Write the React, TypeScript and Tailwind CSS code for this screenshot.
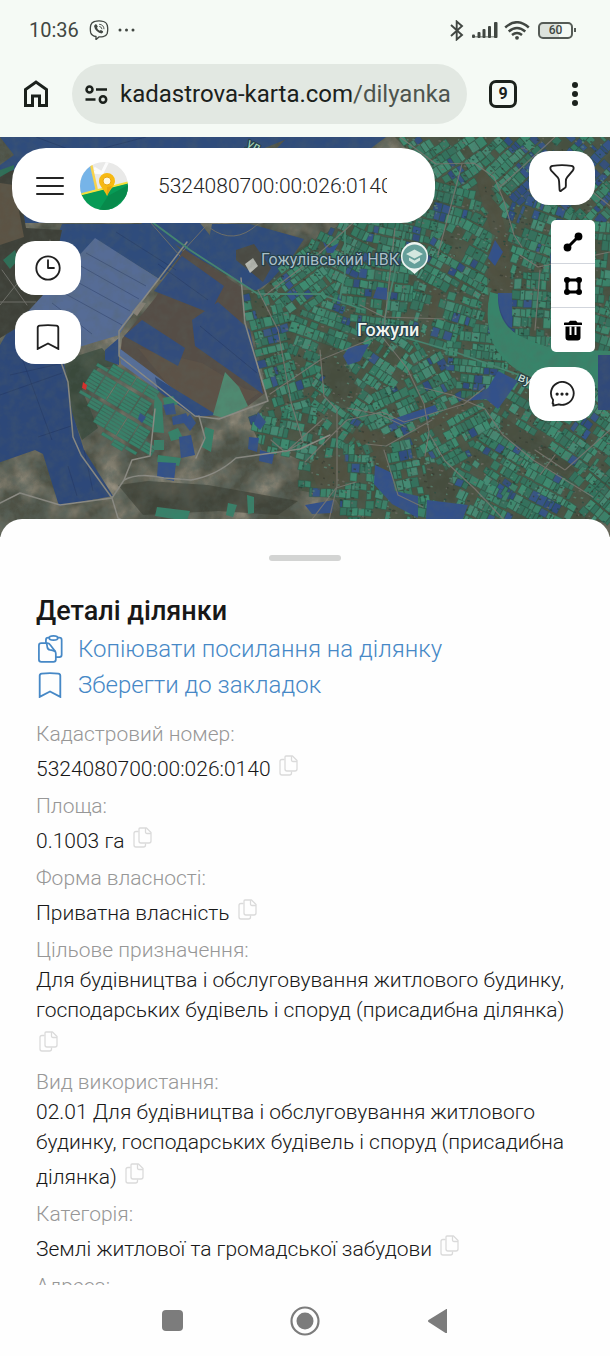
import type { ReactNode } from "react";

type Point = [number, number];

function createRandom(seed: number) {
  let state = seed;
  return () => {
    state = (state * 1664525 + 1013904223) % 4294967296;
    return state / 4294967296;
  };
}

function inside([x, y]: Point, polygon: Point[]) {
  let hit = false;
  for (let i = 0, j = polygon.length - 1; i < polygon.length; j = i++) {
    const [xi, yi] = polygon[i];
    const [xj, yj] = polygon[j];
    if (yi > y !== yj > y && x < ((xj - xi) * (y - yi)) / (yj - yi) + xi) hit = !hit;
  }
  return hit;
}

const toPath = (points: Point[]) =>
  "M" + points.map(([x, y]) => `${x.toFixed(1)} ${y.toFixed(1)}`).join("L") + "Z";

const town: Point[] = [
  [395, 137], [612, 137], [612, 522], [350, 522], [336, 500], [318, 494], [298, 490], [300, 460], [282, 452],
  [262, 450], [250, 422], [268, 400], [262, 370], [252, 330], [241, 290], [262, 290], [300, 248], [345, 222], [425, 170],
];

const wasteland: Point[][] = [
  [[484, 165], [498, 200], [508, 240], [512, 290], [505, 325], [490, 330], [487, 280], [492, 235], [476, 180]],
  [[318, 335], [345, 355], [358, 385], [350, 408], [334, 400], [322, 370]],
  [[355, 425], [400, 438], [470, 395], [478, 402], [420, 436], [385, 445], [390, 475], [376, 475], [368, 445], [345, 440]],
  [[500, 415], [540, 440], [575, 470], [565, 476], [530, 455], [500, 436]],
  [[308, 460], [345, 455], [350, 485], [318, 490]],
  [[425, 460], [452, 468], [455, 502], [430, 500]],
  [[432, 285], [442, 290], [434, 322], [428, 320]],
];

/* Each quarter has a centre and the direction of its plots, in radians. */
const quarters: [number, number, number][] = [
  [262, 330, -0.25], [275, 385, -0.3], [300, 285, -0.65], [345, 250, 0.45], [320, 330, 0.35], [375, 300, 0.12],
  [395, 240, 0.2], [430, 200, 0.25], [445, 155, -0.6], [460, 260, 0.5], [440, 320, 0.3], [385, 365, 0.6],
  [430, 375, -0.5], [470, 360, 0.1], [520, 170, -0.75], [570, 180, -0.8], [540, 230, 0.35], [585, 270, 0.1],
  [540, 310, 0.05], [585, 330, 0.3], [390, 410, -0.45], [290, 440, 0.2], [450, 430, -0.5], [500, 460, 0.55],
  [545, 415, 0.55], [585, 440, 0.6], [550, 495, 0.5], [600, 490, 0.7], [470, 500, 0.45], [410, 480, -0.2],
  [340, 500, 0.05], [400, 515, 0.2], [350, 395, 0.6],
];

function buildParcels() {
  const random = createRandom(71);
  const groups: Record<string, string[]> = {};
  const greens = ["#357a62", "#3a836a", "#3e8b70", "#33725d", "#458b74"];
  quarters.forEach(([cx, cy, angle], index) => {
    const cos = Math.cos(angle);
    const sin = Math.sin(angle);
    const place = (u: number, v: number): Point => [cx + u * cos - v * sin, cy + u * sin + v * cos];
    let v = -56;
    let row = 0;
    while (v < 56) {
      const height = 6 + random() * 4;
      let u = -56;
      while (u < 56) {
        const width = 3 + random() * 6;
        const tilt = random() * 1.6 - 0.8;
        const centre = place(u + width / 2, v + height / 2);
        const pick = random();
        const tint = random();
        const patch =
          Math.sin(centre[0] / 9 + centre[1] / 23) + Math.cos(centre[1] / 8 - centre[0] / 17) + Math.sin((centre[0] + centre[1]) / 31);
        const shape = [place(u, v), place(u + width - 0.4, v + tilt), place(u + width - 0.4, v + height), place(u, v + height - tilt)];
        u += width;
        if (!inside(centre, town) || wasteland.some((area) => inside(centre, area))) continue;
        const own = quarters.every(
          ([qx, qy], other) =>
            other === index || Math.hypot(qx - centre[0], qy - centre[1]) >= Math.hypot(cx - centre[0], cy - centre[1]),
        );
        if (!own || pick > (patch < -0.9 ? 0.5 : 0.93)) continue;
        const blueChance = centre[1] < 220 && centre[0] > 510 ? 0.42 : patch > 1.3 ? 0.36 : 0.03;
        const colour = pick < blueChance ? (tint > 0.5 ? "#304c7f" : "#355488") : greens[Math.floor(tint * greens.length)];
        (groups[colour] ??= []).push(toPath(shape));
      }
      v += height + (row % 2 ? 1.8 : 0.3);
      row++;
    }
  });
  return Object.entries(groups);
}

function buildSpecks() {
  const random = createRandom(9);
  const groups: Record<string, string[]> = { "#706d66": [], "#35392f": [], "#20493d": [], "#5a8b78": [] };
  const keys = Object.keys(groups);
  for (let i = 0; i < 2800; i++) {
    const x = 235 + random() * 375;
    const y = 137 + random() * 385;
    const key = keys[Math.floor(random() * keys.length)];
    const w = 1 + random() * 2;
    if (inside([x, y], town)) groups[key].push(`M${x.toFixed(1)} ${y.toFixed(1)}l${w.toFixed(1)} .6l-.5 1.400l-${w.toFixed(1)}-.6z`);
  }
  return Object.entries(groups);
}

function buildAllotments() {
  const outline: Point[] = [[100, 366], [118, 366], [154, 387], [151, 456], [130, 453], [113, 447], [96, 420], [81, 388]];
  const cells: string[] = [];
  for (let i = -7; i < 9; i++) {
    for (let j = -22; j < 26; j++) {
      const ox = 118 + i * 11.8 - j * 1.9;
      const oy = 408 + i * 7 + j * 3;
      const cell: Point[] = [[ox, oy], [ox + 10.8, oy + 6.4], [ox + 9.1, oy + 9.1], [ox - 1.7, oy + 2.7]];
      if (j % 7 !== 0 && inside([ox + 4.5, oy + 4.5], outline)) cells.push(toPath(cell));
    }
  }
  return cells.join("");
}

const parcels = buildParcels();
const specks = buildSpecks();
const allotments = buildAllotments();

function SatelliteMap() {
  return (
    <svg
      className="absolute inset-0 h-full w-full"
      viewBox="0 137 610 400"
      preserveAspectRatio="xMidYMin slice"
      role="img"
      aria-label="Гожули"
    >
      <defs>
        <filter id="grain" x="0" y="0" width="100%" height="100%">
          <feTurbulence type="fractalNoise" baseFrequency="0.1" numOctaves="5" seed="4" />
          <feColorMatrix values="0 0 0 0 0.1  0 0 0 0 0.13  0 0 0 0 0.11  1.7 0 0 0 -0.6" />
        </filter>
        <filter id="haze" x="0" y="0" width="100%" height="100%">
          <feTurbulence type="fractalNoise" baseFrequency="0.03" numOctaves="4" seed="12" />
          <feColorMatrix values="0 0 0 0 0.42  0 0 0 0 0.37  0 0 0 0 0.29  0 1.6 0 0 -0.62" />
        </filter>
      </defs>
      <path fill="#4e5145" d="M0 137h610v400H0z" />
      <path filter="url(#haze)" d="M0 137h610v400H0z" />
      <path filter="url(#grain)" opacity=".75" d="M0 137h610v400H0z" />

      {/* Forest belts and ravines */}
      <g opacity=".6">
        <path fill="#2e4436" d="M64 360l38-12 16 18-20 2-16 22 16 38-16 12-12-30z" />
        <path fill="#383c32" d="M118 485l30-4 60 4 90 16-20 14-60-4-75 4z" />
        <path fill="#2b3f36" d="M530 440l25 10 20 20-12 2-30-18z" />
      </g>

      {/* Large fields */}
      <g fill="#2f4c7c">
        <path d="M0 137h292l-30 12-20 74h-42l55 68-66-38-48-30H0l0-58 14-10z" />
        <path d="M62 224h91l30 28-22 28-66-41-50 72-18 2z" />
        <path fill="#2d4879" d="M0 345l16-28 28-3 20 48 8 50 12 38 29 46-54 10-16-52-8-4-37 13z" />
        <path d="M212 224h38l54 15-24 36-24 16-50-36z" />
        <path d="M288 137h98l-16 12h-94z" />
      </g>
      <path fill="#3e4038" d="M0 172l16-2 10 58 36 2-12 55-20 35L0 338z" />
      <path fill="#5c5344" d="M0 183l14 2 10 52-24 8z" />
      <path fill="#4a4a43" d="M236 250l18-6 17 24-8 14-27-22z" />
      <path fill="#b8bab2" d="M245 264l8-6 5 8-8 7z" />
      <path fill="#554d46" d="M184 249l57 38 2 36 22 70-17 13-49 11-79-60 2-18 34-42z" />
      <path fill="#65584a" opacity=".45" d="M138 348l64 15 43 26 15 3-33 24-32 2z" />
      <path fill="#566c96" d="M95 238l64 41-34 46-6 10-40 12-17 12-40-41z" />
      <path fill="#8a8378" d="M140 302l6 1-9 13-5-4z" />
      <path fill="#2f4c82" fillOpacity=".9" d="M182 256l42 30-14 27-56-22zM142 320l43 28-7 18-54-30zM192 320l26-18 32 28 13 64-68-48z" />
      <path fill="#566f9b" d="M119 348l43 32 44 35-12 1-73-52z" />
      <path fill="#2f4c7f" d="M155 377l62 38-22 2-37-26zM105 350l14-12v27l-14-5z" />
      <path fill="#4f8a71" d="M225 372l14 15 9 19-24 12-11-3z" />
      <path fill="#2c7058" d="M0 170l14-5v4l-14 8zM3 260l12-10 3 10-8 9z" />
      <path stroke="#1c2e58" strokeWidth=".6" opacity=".6" fill="none" d="M86 253l60 33M79 265l60 34M70 278l60 33M62 292l60 33M52 303l40 31M18 347l34 93M0 395l62-22M38 437l33-11M158 264l50 36M200 326l57 47M10 375l58-13M68 466l9 30M84 450l9 41M116 232l60 38M36 137l40 15M146 137l-46 12" />

      {/* Settlement parcels */}
      <path fill="#45503f" opacity=".8" d={toPath(town)} />
      {parcels.map(([colour, shapes]) => (
        <path key={colour} fill={colour} stroke="#265344" strokeWidth=".4" d={shapes.join("")} />
      ))}
      {wasteland.map((area, index) => (
        <path key={index} fill={index % 2 ? "#45493c" : "#544e3d"} opacity=".5" d={toPath(area)} />
      ))}
      {specks.map(([colour, shapes]) => (
        <path key={colour} fill={colour} opacity=".7" d={shapes.join("")} />
      ))}
      <path fill="#37826a" stroke="#2b6b57" strokeWidth=".3" d={allotments} />
      <g fill="#37826a">
        <path d="M155 393l7 10 2 30-12-1zM163 398l10-2 5 8-13 4zM154 440h10v10h-10zM168 432l10-4 5 10-12 3zM158 455l23 3-2 8-22-4zM205 427l9 3-3 22-9-5zM157 507l33 4-3 10-32-5zM228 503l9 2-4 12-7-2zM247 495l7 2 0 16-6 1z" />
      </g>
      <g fill="#33518a">
        <path d="M163 405l11-2 2 11-10 1zM172 417l14-4 4 9-17 3zM190 414l6 9-6 8-7-9zM179 437l12-2 4 20-14 3zM158 462l18 1-2 18-17-4zM140 413l6 4-4 6-4-4zM258 412l8 10-6 8-6-6zM249 437l10 1-2 14-9-3zM260 450l14 4-2 10-13-3zM349 347l20-3-9 17-12 4-5-9zM498 371l20 10-20 28-12-10-20 2 22-13zM498 293h14v35l-12-6-7-18zM495 240l8 12-8 14-7-8zM377 287l10 1 0 12-14-2zM550 252l5 20-4 4zM323 241l6 7 10-5-6 10h-6zM375 465l17 8 3 18 23 5v22l-26-14-18-20z" />
        <path d="M305 505l29-5-2 13-20 1zM390 420l45-15 3 6-40 15zM427 500l41 5-6 16-36-2z" />
      </g>
      <path fill="#d9302c" d="M83 382l4 3-1 5-4-2z" />

      {/* River bend */}
      <path fill="#31497a" d="M498 294q0 24 18 40t42 18l52 4v9l-50-6q-42-7-60-30-10-15-8-35z" />
      <path fill="#38846a" d="M490 292l8 2q-1 30 22 42 24 12 42 13l48 2v34h-16l-63-8q-28-12-38-34-9-22-3-51z" />
      <path fill="#30497a" d="M598 355h12v55h-12z" />

      {/* Roads */}
      <g fill="none" strokeLinejoin="round" strokeLinecap="round">
        <path stroke="#8c8b84" strokeWidth="1.5" d="M61 362l7 20 5 55 8 18 31 43 12-18q15-8 40-2l27 2q25-4 45-22l64-9 30-14M112 498l6 20 22 11M112 498l-52 7-40-12-20 10M124 480l8-20 18-4 5-47M241 278l4 45 23 78-49 18-24-3-76-60 0-25 68-89M199 416l6 22-9 20" />
        <path stroke="#6f6f69" strokeWidth="1" d="M0 305l48-60M50 240l2 40M2 270l25 35M0 302h36M183 251l22-24 7-8M150 222l30 34M210 228q24 18 48-4l30-8" />
        <path stroke="#458670" strokeWidth="1.800" d="M152 222l38 28 68 44h62l44 16M400 336l55 16 67 24M382 330l20-90M345 222v50l-5 26" />
        <path stroke="#7c7871" strokeWidth="1.200" opacity=".85" d="M400 137l36 27 38-1 20 14 10 24 10 34 8 12M462 164l-24 90M395 228l-12 110 24 30 17 36 5 28-4 24M424 388l28 7 33 14 18 26 30 25 60 37M320 350l4 46 13 14v76l-8 34M305 462l42-42 35-8 22 10 60-18 20-16M347 408l32 6 25 12M366 444l20 2 46-26M384 450l14 45 25 12M430 435l15 26 30 28 30 32M258 290l20 40 13 72 12 40-18 10-14-12M264 296l50-38 40-36M520 255l18 12 72-15M540 270l-5 60M360 305l24 12 60 2M412 160l-20 60M555 137l-55 50M590 190l20 16M610 430l-45 40-30-20M555 455l-15 20M270 394l50-34 56-23M288 450l34-30M310 522l26-34 20-6" />
      </g>
      <path filter="url(#grain)" opacity=".28" d="M0 137h610v400H0z" />

      {/* Place names */}
      <g className="font-[Roboto,sans-serif]" stroke="#26404a" strokeWidth="2.400" paintOrder="stroke" strokeLinejoin="round">
        <text x="261" y="265" fontSize="16" fill="#a9bfc8">Гожулівський НВК</text>
        <text x="357" y="336" fontSize="18" fontWeight="500" fill="#f0f3ee">Гожули</text>
        <text x="517" y="380" fontSize="13" fill="#d3e5dc" transform="rotate(24 517 380)">ву</text>
        <text x="246" y="146" fontSize="13" fill="#a8d7ba" transform="rotate(28 246 146)">ул</text>
      </g>
      <path fill="#edf4f1" d="M414.500 242a14 14 0 0 0-13.500 15c0 7 5 11 9 13l4.500 4 4.500-4c5-3 9-7 9-13a14 14 0 0 0-13.500-15z" />
      <circle cx="414.500" cy="256.500" r="12" fill="#659f9a" />
      <path fill="#d3e7df" d="M406 254l8.500-4.500 8.500 4.500-8.500 4.500zM409 257.500l5.500 3 5.500-3v3l-5.500 3.500-5.500-3.500z" />
    </svg>
  );
}

function Line({ className, children, width = 2 }: { className: string; children: ReactNode; width?: number }) {
  return (
    <svg
      className={className}
      viewBox="0 0 24 24"
      fill="none"
      stroke="currentColor"
      strokeWidth={width}
      strokeLinecap="round"
      strokeLinejoin="round"
      aria-hidden="true"
    >
      {children}
    </svg>
  );
}

const BookmarkIcon = ({ className }: { className: string }) => (
  <Line className={className} width={1.7}>
    <path d="M2.500 23V3.500q0-1.800 1.800-2Q12 .7 19.700 1.500q1.800.2 1.800 2V23L12 18z" strokeLinejoin="miter" />
  </Line>
);

function StatusBar() {
  return (
    <div className="flex h-[60px] items-center justify-between pr-[34px] pl-[29px] text-[#414742]">
      <div className="flex items-center">
        <span className="text-[20px] leading-6">10:36</span>
        <svg className="ml-[10px] h-5 w-5" viewBox="0 0 20 20" fill="none" stroke="currentColor" strokeWidth="1.300" strokeLinecap="round" aria-label="Viber">
          <path d="M5.500 1.500Q10 .2 14.500 1.500 17.700 2.400 18.300 5.500q.9 4-.1 8-1 2.700-4 3.100-2 .4-4.200.3l-3 2.700v-3.100Q2.800 15.800 1.800 13q-1-4 0-8Q2.700 2.200 5.500 1.500z" />
          <path d="M10.500 4.300q4.300.3 4.500 4.500M10.700 6.500q2 .2 2.200 2.300" strokeWidth=".9" />
          <path fill="currentColor" stroke="none" d="M6.300 4.300l1.300.2 1.200 2-.8 1.300q.6 2 2.700 2.900l1.200-.8 2.100 1.300.1 1-1.400 1.400q-2.700-.3-5-2.600-2.300-2.400-2.700-5z" />
        </svg>
        <svg className="ml-[9px] h-1 w-[17px]" viewBox="0 0 17 4" fill="currentColor" aria-hidden="true">
          <circle cx="2" cy="2" r="1.500" /><circle cx="8.500" cy="2" r="1.500" /><circle cx="15" cy="2" r="1.500" />
        </svg>
      </div>
      <div className="flex items-center">
        <svg className="h-[21px] w-[14px]" viewBox="0 0 14 21" fill="none" stroke="currentColor" strokeWidth="1.900" aria-label="Bluetooth">
          <path d="M1 5l11 10-5.300 4.500V1.500L12 6 1 16" />
        </svg>
        <svg className="ml-[8px] h-4 w-[26px]" viewBox="0 0 26 16" fill="currentColor" aria-hidden="true">
          <rect x="0" y="12.500" width="3" height="3.500" rx="1" /><rect x="5.500" y="10" width="3" height="6" rx="1" />
          <rect x="10.500" y="7" width="3" height="9" rx="1" /><rect x="16" y="4" width="3" height="12" rx="1" /><rect x="22" y="0" width="3.500" height="16" rx="1" />
          <rect x="3" y="14" width="21" height="1.500" opacity=".5" />
        </svg>
        <svg className="ml-[6px] h-[19px] w-[26px]" viewBox="0 0 26 19" fill="none" stroke="currentColor" strokeWidth="2.500" aria-label="Wi-Fi">
          <path d="M1.200 6.500Q13-4 24.800 6.500M4.700 10.500q8.300-7 16.600 0M8 14q5-4 10 0" />
          <circle cx="13" cy="16.800" r="1.900" fill="currentColor" stroke="none" />
        </svg>
        <span className="ml-[8px] flex h-[17px] w-[35px] items-center justify-center rounded-[5px] border-2 border-[#555b56] bg-linear-to-r from-[#dce2dc] from-60% to-[#f5faf5] to-60% text-[12px] leading-3 font-medium">60</span>
        <span className="ml-px h-1 w-[2px] bg-[#555b56]" />
      </div>
    </div>
  );
}

function BrowserBar() {
  return (
    <div className="flex items-center px-[23px] pt-1 pb-[13px] text-[#1b211c]">
      <button type="button" aria-label="Home" className="shrink-0">
        <svg className="h-[30px] w-[26px]" viewBox="0 0 26 30" fill="none" stroke="currentColor" strokeWidth="3">
          <path d="M2.500 26.500V10.500L13 3l10.500 7.500v16h-7V17h-7v9.500z" />
        </svg>
      </button>
      <div className="ml-[23px] flex h-[60px] min-w-0 flex-1 items-center rounded-full bg-[#e2e8e2] pr-1 pl-3">
        <button type="button" aria-label="Site information" className="shrink-0">
          <svg className="h-[19px] w-6" viewBox="0 0 24 19" fill="none" stroke="currentColor" strokeWidth="2.500">
            <circle cx="5.500" cy="4.500" r="3" /><path d="M12 4.500h11M1.500 14.500h10" /><circle cx="19" cy="14.500" r="3.200" />
          </svg>
        </button>
        <span className="ml-3 whitespace-nowrap text-[24px] leading-8">
          kadastrova-karta.com<span className="text-[#4d544e]">/dilyanka</span>
        </span>
      </div>
      <button type="button" aria-label="Tabs" className="ml-[22px] flex h-7 w-7 shrink-0 items-center justify-center rounded-[7px] border-[3px] border-current text-[16px] leading-4 font-bold">
        9
      </button>
      <button type="button" aria-label="Menu" className="ml-[46px] w-6 shrink-0">
        <svg className="mx-auto h-6 w-2" viewBox="0 0 8 24" fill="currentColor">
          <circle cx="4" cy="3" r="3" /><circle cx="4" cy="12" r="3" /><circle cx="4" cy="21" r="3" />
        </svg>
      </button>
    </div>
  );
}

function Logo() {
  return (
    <svg className="h-12 w-12 shrink-0" viewBox="0 0 48 48" role="img" aria-label="Kadastrova karta">
      <clipPath id="logo-disc"><circle cx="24" cy="24" r="24" /></clipPath>
      <g clipPath="url(#logo-disc)">
        <path fill="#e9e9e8" d="M0 0h48v48H0z" />
        <path fill="#76b4e8" d="M0 0h10l7 27-17 6z" />
        <path stroke="#fbfbfb" strokeWidth="3" fill="none" d="M14 6l8 5 15 15M12 10l10 1 6-12" />
        <path stroke="#f8d34b" strokeWidth="2.500" fill="none" d="M11 2l6 27" />
        <path fill="#079b56" d="M0 33l48-12v27H0z" />
        <path fill="#078a4b" d="M28 34l20-11v10L31 48H19z" />
        <path stroke="#f5df3a" strokeWidth="2" fill="none" d="M0 32.500l48-12" />
        <path fill="#f7b912" d="M27 11a8 8 0 0 0-8 8c0 5 5 8 8 15 3-7 8-10 8-15a8 8 0 0 0-8-8z" />
        <path fill="#e8a512" d="M27 34V25l5-1c-2 3-3 6-5 10z" />
        <circle cx="27" cy="19" r="4" fill="#fff8df" stroke="#e8a512" />
      </g>
    </svg>
  );
}

const mapButton = "flex h-[54px] w-[66px] items-center justify-center rounded-[20px] bg-white text-[#202020]";
const toolButton = "flex h-11 w-11 items-center justify-center text-black";

function MapSection() {
  return (
    <section className="relative h-[400px] shrink-0">
      <SatelliteMap />
      <div className="relative flex items-start gap-[94px] pr-[15px] pl-3">
        <div className="min-w-0 flex-1 pt-[11px]">
          <div className="flex h-[75px] items-center rounded-[34px] bg-white pr-12 pl-6">
            <button type="button" aria-label="Меню">
              <svg className="h-5 w-7" viewBox="0 0 28 20" stroke="#242424" strokeWidth="2" strokeLinecap="round">
                <path d="M1 2h26M1 10h26M1 18h26" />
              </svg>
            </button>
            <span className="ml-4"><Logo /></span>
            <input
              type="text"
              aria-label="Кадастровий номер"
              defaultValue="5324080700:00:026:0140"
              className="ml-[30px] h-10 min-w-0 flex-1 bg-transparent text-[21px] font-light text-[#242424] outline-none"
            />
          </div>
          <div className="mt-[18px] ml-[3px] flex flex-col gap-[15px]">
            <button type="button" aria-label="Історія" className={mapButton}>
              <Line className="h-[26px] w-[26px]" width={1.7}><circle cx="12" cy="12" r="10.800" /><path d="M12 4.800V12h5.500" /></Line>
            </button>
            <button type="button" aria-label="Закладки" className={mapButton}>
              <BookmarkIcon className="h-[26px] w-[26px]" />
            </button>
          </div>
        </div>
        <div className="flex flex-col items-end gap-[15px] pt-[14px]">
          <button type="button" aria-label="Фільтр" className={mapButton}>
            <Line className="h-7 w-7" width={1.6}>
              <path d="M2 3.500q0-1.600 2-1.900Q12 .4 20 1.600q2 .3 2 1.900 0 1.200-.8 2.200l-4.700 5.600q-1.200 1.400-1.200 3.500v4q0 1.400-1.200 2l-2.700 2q-1.400.9-1.500-.8l-.4-7q0-2-1.200-3.600L2.800 5.700Q2 4.700 2 3.500z" />
            </Line>
          </button>
          <div className="divide-y divide-gray-300 overflow-hidden rounded-[5px] bg-white">
            <button type="button" aria-label="Виміряти відстань" className={toolButton}>
              <svg className="h-5 w-5" viewBox="0 0 20 20" fill="currentColor">
                <path d="M4 16L16 4" stroke="currentColor" strokeWidth="3" /><circle cx="4.500" cy="15.500" r="3.900" /><circle cx="15.500" cy="4.500" r="3.900" />
              </svg>
            </button>
            <button type="button" aria-label="Виміряти площу" className={toolButton}>
              <svg className="h-5 w-5" viewBox="0 0 20 20" fill="currentColor">
                <path d="M4 4h12v12H4z" fill="none" stroke="currentColor" strokeWidth="3" />
                <circle cx="4" cy="4" r="3" /><circle cx="16" cy="4" r="3" /><circle cx="4" cy="16" r="3" /><circle cx="16" cy="16" r="3" />
              </svg>
            </button>
            <button type="button" aria-label="Видалити" className={toolButton}>
              <svg className="h-[21px] w-5" viewBox="0 0 20 21" fill="currentColor">
                <path d="M1 5V3.200q0-.7.800-.7h3.700L7 .8h6l1.500 1.700h3.700q.8 0 .8.700V5zM2.500 6.500h15v11q0 3-3 3h-9q-3 0-3-3z" />
                <path d="M7.500 6.500V15M12.500 6.500V15" stroke="#fff" strokeWidth="2" />
              </svg>
            </button>
          </div>
          <button type="button" aria-label="Чат" className={mapButton}>
            <Line className="h-[26px] w-[26px]" width={1.7}>
              <path d="M3.300 20.800H4l-.1 2 5.200-1.300Q12 22.500 15 21.500a10.500 10.500 0 1 0-11.200-4z" />
              <g fill="currentColor" stroke="none"><circle cx="7.500" cy="12" r="1.500" /><circle cx="12" cy="12" r="1.500" /><circle cx="16.500" cy="12" r="1.500" /></g>
            </Line>
          </button>
        </div>
      </div>
    </section>
  );
}

const details = [
  { label: "Кадастровий номер:", value: "5324080700:00:026:0140" },
  { label: "Площа:", value: "0.1003 га" },
  { label: "Форма власності:", value: "Приватна власність" },
  { label: "Цільове призначення:", value: "Для будівництва і обслуговування житлового будинку, господарських будівель і споруд (присадибна ділянка)" },
  { label: "Вид використання:", value: "02.01 Для будівництва і обслуговування житлового будинку, господарських будівель і споруд (присадибна ділянка)" },
  { label: "Категорія:", value: "Землі житлової та громадської забудови" },
  { label: "Адреса:", value: "" },
];

function DetailsSheet() {
  return (
    <main className="relative -mt-[18px] min-h-0 flex-1 overflow-hidden rounded-t-[22px] bg-[#fefefe] px-9 pt-9">
      <div className="mx-auto h-[6px] w-[72px] rounded-full bg-[#d3d4d3]" />
      <h1 className="mt-8 text-[27px] leading-9 font-medium text-[#181818]">Деталі ділянки</h1>
      <div className="mt-[2px] flex flex-col items-start text-[24px] leading-9 font-light text-[#4688c6]">
        <button type="button" className="flex items-center gap-[14px]">
          <Line className="h-7 w-7" width={1.5}>
            <path d="M4.500 7h5q1.700 0 2.600 1.300l4 5.200q.9 1.100.9 2.500v5q0 2-2 2H4.500q-2 0-2-2V9q0-2 2-2z" />
            <path d="M9 7q.5 1.500.7 3.500.3 2 2.300 2.300 2 .2 4.500 1.200M8.500 7V4.200q0-2 2-2h.7M18.500 2.200h1.500q2 0 2 2V17q0 2-2 2h-3" />
            <ellipse cx="15" cy="2.600" rx="3.700" ry="1.800" />
          </Line>
          Копіювати посилання на ділянку
        </button>
        <button type="button" className="flex items-center gap-[14px]">
          <BookmarkIcon className="h-[26px] w-7" />
          Зберегти до закладок
        </button>
      </div>
      <dl className="mt-4 text-[21px] leading-[30px] font-light">
        {details.map(({ label, value }) => (
          <div key={label}>
            <dt className="text-[#979797]">{label}</dt>
            {value && (
              <dd className="text-[#181818]">
                {value}{" "}
                <button type="button" aria-label={`Копіювати: ${label}`} className="ml-[3px] inline-flex h-[42px] w-[19px] pt-[6px] align-middle text-[#dadada]">
                  <svg className="h-[21px] w-[19px]" viewBox="0 0 19 21" fill="none" stroke="currentColor" strokeWidth="1.300" strokeLinejoin="round">
                    <path d="M7 1h6.500L18 5.500V14q0 2-2 2H8q-2 0-2-2V2q0-1 1-1z" />
                    <path d="M12.500 1v4q0 1.500 1.500 1.500h4M5.500 4.500H3q-2 0-2 2V18q0 2 2 2h7.500q2 0 2-2v-1.500" />
                  </svg>
                </button>
              </dd>
            )}
          </div>
        ))}
      </dl>
    </main>
  );
}

function SystemNavigation() {
  return (
    <nav aria-label="System" className="flex h-[71px] shrink-0 items-center justify-center gap-[101px] bg-[#fefefe] text-[#7c7c7c]">
      <button type="button" aria-label="Recents" className="flex w-8 justify-center">
        <span className="h-[21px] w-[21px] rounded-[4px] bg-[#7c7c7c]" />
      </button>
      <button type="button" aria-label="Home">
        <svg className="h-8 w-8" viewBox="0 0 32 32" fill="none" stroke="currentColor">
          <circle cx="16" cy="16" r="13.500" strokeWidth="2.200" /><circle cx="16" cy="16" r="8.500" fill="currentColor" stroke="none" />
        </svg>
      </button>
      <button type="button" aria-label="Back" className="flex w-8 justify-center">
        <svg className="h-6 w-5" viewBox="0 0 20 24" fill="currentColor"><path d="M19 0v24q0 1-1 .3L.5 13q-1-1 0-2L18 .2q1-.8 1 0z" /></svg>
      </button>
    </nav>
  );
}

export default function App() {
  return (
    <div className="flex h-screen flex-col overflow-hidden bg-[#fefefe] font-[Roboto,'Liberation_Sans',sans-serif]">
      <header className="shrink-0 bg-[#f5faf5]">
        <StatusBar />
        <BrowserBar />
      </header>
      <MapSection />
      <DetailsSheet />
      <SystemNavigation />
    </div>
  );
}
